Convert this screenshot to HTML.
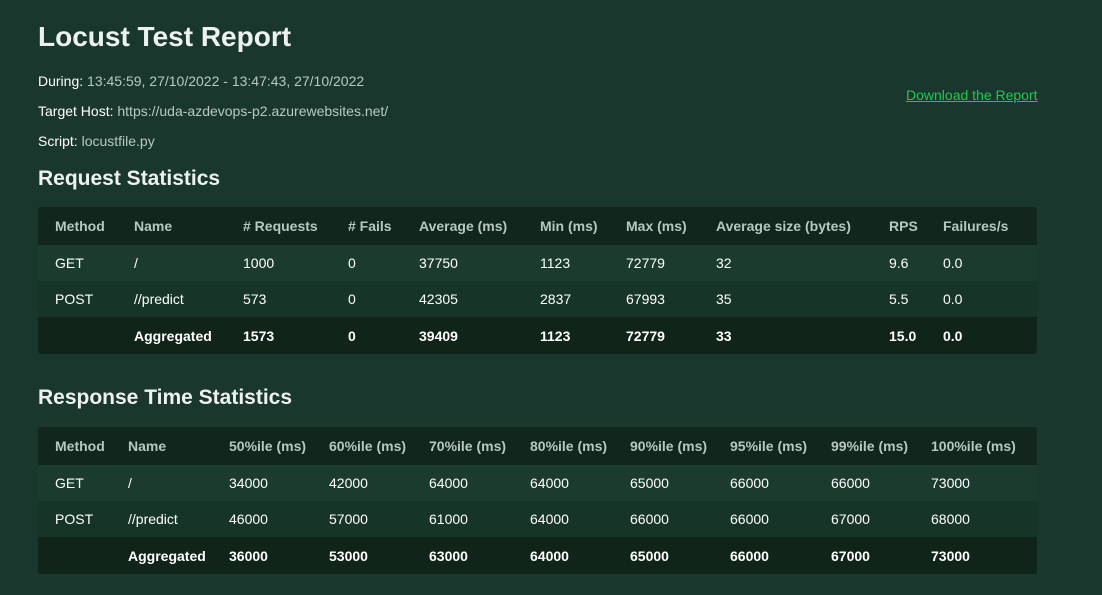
<!DOCTYPE html>
<html><head><meta charset="utf-8"><style>
body{margin:0;width:1102px;height:595px;background:#1a372e;font-family:"Liberation Sans",sans-serif;color:#fff;position:relative;overflow:hidden}
.a{position:absolute;white-space:nowrap}
h1{position:absolute;left:38px;top:21px;margin:0;font-size:28px;font-weight:bold;color:#eef2ef}
h2{position:absolute;left:38px;margin:0;font-size:21px;font-weight:bold;color:#eef2ef}
.info{font-size:14px;color:#fff}
.info span{color:#b9c8c1}
.dl{left:906px;top:87px;font-size:14px;color:#1fc94f;text-decoration:underline}
.t{position:absolute;left:38px;width:999px;height:147px;border-radius:3px;overflow:hidden;background:#1b3a2f}
.r{position:absolute;left:0;width:999px;font-size:14px}
.h{top:0;height:38px;background:#11271e;color:#b6c8bf;font-weight:bold}
.r1{top:38px;height:36px;background:#1b3b2f}
.r2{top:74px;height:36px;background:#173428}
.ag{top:110px;height:37px;background:#112419;font-weight:bold}
.r div{position:absolute;top:50%;transform:translateY(-50%)}
</style></head><body>
<h1>Locust Test Report</h1>
<div class="a info" style="left:38px;top:73px">During: <span>13:45:59, 27/10/2022 - 13:47:43, 27/10/2022</span></div>
<div class="a info" style="left:38px;top:103px">Target Host: <span>https://uda-azdevops-p2.azurewebsites.net/</span></div>
<div class="a info" style="left:38px;top:133px">Script: <span>locustfile.py</span></div>
<div class="a dl">Download the Report</div>
<h2 style="top:167px">Request Statistics</h2>
<div class="t" style="top:207px">
<div class="r h"><div style="left:17px">Method</div><div style="left:96px">Name</div><div style="left:205px"># Requests</div><div style="left:310px"># Fails</div><div style="left:381px">Average (ms)</div><div style="left:502px">Min (ms)</div><div style="left:588px">Max (ms)</div><div style="left:678px">Average size (bytes)</div><div style="left:851px">RPS</div><div style="left:905px">Failures/s</div></div>
<div class="r r1"><div style="left:17px">GET</div><div style="left:96px">/</div><div style="left:205px">1000</div><div style="left:310px">0</div><div style="left:381px">37750</div><div style="left:502px">1123</div><div style="left:588px">72779</div><div style="left:678px">32</div><div style="left:851px">9.6</div><div style="left:905px">0.0</div></div>
<div class="r r2"><div style="left:17px">POST</div><div style="left:96px">//predict</div><div style="left:205px">573</div><div style="left:310px">0</div><div style="left:381px">42305</div><div style="left:502px">2837</div><div style="left:588px">67993</div><div style="left:678px">35</div><div style="left:851px">5.5</div><div style="left:905px">0.0</div></div>
<div class="r ag"><div style="left:96px">Aggregated</div><div style="left:205px">1573</div><div style="left:310px">0</div><div style="left:381px">39409</div><div style="left:502px">1123</div><div style="left:588px">72779</div><div style="left:678px">33</div><div style="left:851px">15.0</div><div style="left:905px">0.0</div></div>
</div>
<h2 style="top:386px">Response Time Statistics</h2>
<div class="t" style="top:427px">
<div class="r h"><div style="left:17px">Method</div><div style="left:90px">Name</div><div style="left:191px">50%ile (ms)</div><div style="left:291px">60%ile (ms)</div><div style="left:391px">70%ile (ms)</div><div style="left:492px">80%ile (ms)</div><div style="left:592px">90%ile (ms)</div><div style="left:692px">95%ile (ms)</div><div style="left:793px">99%ile (ms)</div><div style="left:893px">100%ile (ms)</div></div>
<div class="r r1"><div style="left:17px">GET</div><div style="left:90px">/</div><div style="left:191px">34000</div><div style="left:291px">42000</div><div style="left:391px">64000</div><div style="left:492px">64000</div><div style="left:592px">65000</div><div style="left:692px">66000</div><div style="left:793px">66000</div><div style="left:893px">73000</div></div>
<div class="r r2"><div style="left:17px">POST</div><div style="left:90px">//predict</div><div style="left:191px">46000</div><div style="left:291px">57000</div><div style="left:391px">61000</div><div style="left:492px">64000</div><div style="left:592px">66000</div><div style="left:692px">66000</div><div style="left:793px">67000</div><div style="left:893px">68000</div></div>
<div class="r ag"><div style="left:90px">Aggregated</div><div style="left:191px">36000</div><div style="left:291px">53000</div><div style="left:391px">63000</div><div style="left:492px">64000</div><div style="left:592px">65000</div><div style="left:692px">66000</div><div style="left:793px">67000</div><div style="left:893px">73000</div></div>
</div>
</body></html>
